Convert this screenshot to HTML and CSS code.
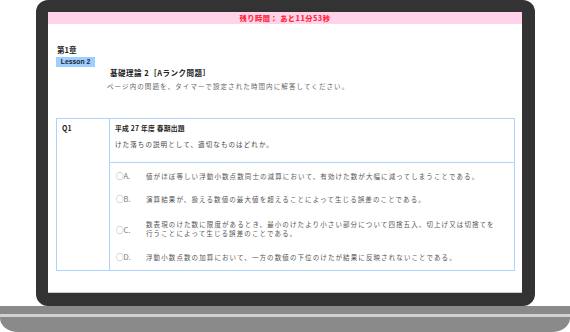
FILE: index.html
```html
<!DOCTYPE html>
<html lang="ja">
  <head>
    <meta charset="UTF-8" />
    <meta name="viewport" content="width=device-width, initial-scale=1.0" />
    <title>基礎理論 2［Aランク問題］</title>
    <link rel="stylesheet" href="styles.css">
  </head>
  <body>
    <div class="laptop">
      <div class="lid">
        <div class="screen">
          <div class="timer">残り時間： あと11分53秒</div>
          <div class="page">
            <p class="chapter">第1章</p>
            <span class="badge">Lesson 2</span>
            <h1 class="title">基礎理論 2［Aランク問題］</h1>
            <p class="lead">ページ内の問題を、タイマーで設定された時間内に解答してください。</p>

            <div class="question">
              <div class="q-no">Q1</div>
              <div class="q-main">
                <div class="q-head">
                  <p class="q-source">平成 27 年度 春期出題</p>
                  <p class="q-text">けた落ちの説明として、適切なものはどれか。</p>
                </div>
                <ul class="choices">
                  <li><span class="mark">○A.</span><span class="ans">値がほぼ等しい浮動小数点数同士の減算において、有効けた数が大幅に減ってしまうことである。</span></li>
                  <li><span class="mark">○B.</span><span class="ans">演算結果が、扱える数値の最大値を超えることによって生じる誤差のことである。</span></li>
                  <li class="two-line"><span class="mark">○C.</span><span class="ans">数表現のけた数に限度があるとき、最小のけたより小さい部分について四捨五入、切上げ又は切捨てを<br />行うことによって生じる誤差のことである。</span></li>
                  <li class="after-two"><span class="mark">○D.</span><span class="ans">浮動小数点数の加算において、一方の数値の下位のけたが結果に反映されないことである。</span></li>
                </ul>
              </div>
            </div>
          </div>
        </div>
      </div>
      <div class="base"></div>
    </div>
  </body>
</html>
```

FILE: styles.css
```css
body {
  margin: 0;
  background-color: #fff;
  font-family: "Noto Sans CJK JP", "Liberation Sans", sans-serif;
}
p,
h1,
ul {
  margin: 0;
  padding: 0;
}
.laptop {
  width: 570px;
  height: 332px;
  overflow: hidden;
}
.lid {
  width: 474px;
  margin-left: 36px;
  padding: 12px 13px 13px 12px;
  background-color: #333;
  border-radius: 12px;
}
.screen {
  height: 281px;
  background-color: #fff;
  border-bottom: 1px solid #ccc;
  box-sizing: border-box;
}
.timer {
  height: 12px;
  line-height: 12px;
  background-color: #ffd4ea;
  color: #ff2a3a;
  font-size: 7.2px;
  font-weight: 900;
  text-align: center;
  letter-spacing: 0.5px;
}
.page {
  padding: 0 7px 0 8px;
  color: #444;
  font-size: 6.5px;
  letter-spacing: 1.1px;
}
.chapter {
  margin-top: 21px;
  padding-left: 1px;
  line-height: 10px;
  font-size: 7.5px;
  font-weight: bold;
  letter-spacing: 0;
  color: #222;
}
.badge {
  display: block;
  width: 39px;
  height: 10px;
  margin-top: 2px;
  line-height: 10px;
  background-color: #9ccfff;
  color: #223;
  font-family: "Liberation Sans", sans-serif;
  font-size: 6.8px;
  font-weight: bold;
  letter-spacing: 0;
  text-align: center;
}
.title {
  margin-top: 1px;
  padding-left: 54px;
  line-height: 10px;
  font-size: 7.5px;
  letter-spacing: 0.5px;
  color: #222;
}
.lead {
  margin-top: 3px;
  padding-left: 51px;
  line-height: 10px;
  color: #666;
}
.question {
  display: grid;
  grid-template-columns: 53px 1fr;
  height: 153px;
  margin-top: 27px;
  border: 1px solid #a8d4ff;
  box-sizing: border-box;
}
.q-no {
  padding: 4px 0 0 5px;
  line-height: 10px;
  font-size: 7px;
  font-weight: bold;
  letter-spacing: 0;
  color: #222;
  border-right: 1px solid #a8d4ff;
}
.q-head {
  padding: 4px 0 13px 5px;
  border-bottom: 1px solid #a8d4ff;
}
.q-source {
  line-height: 10px;
  font-size: 6.8px;
  font-weight: bold;
  letter-spacing: 0.2px;
  color: #222;
}
.q-text {
  margin-top: 6px;
  line-height: 10px;
}
.choices {
  list-style: none;
  padding: 8px 0 0 6px;
}
.choices li {
  display: flex;
  align-items: center;
  margin-top: 13px;
  line-height: 10px;
}
.choices li:first-child {
  margin-top: 0;
}
.choices li.two-line {
  margin-top: 16px;
  line-height: 9px;
}
.choices li.after-two {
  margin-top: 14px;
}
.mark {
  width: 30px;
  flex-shrink: 0;
  font-size: 7.5px;
  letter-spacing: 0;
  color: #777;
}
.ans {
  color: #555;
}
.base {
  height: 26px;
  background: linear-gradient(
    #8a8a8a 0,
    #8a8a8a 8px,
    #d2d2d2 8px,
    #d2d2d2 11px,
    #8a8a8a 11px
  );
  border-radius: 0 0 18px 18px / 0 0 14px 14px;
}
```
